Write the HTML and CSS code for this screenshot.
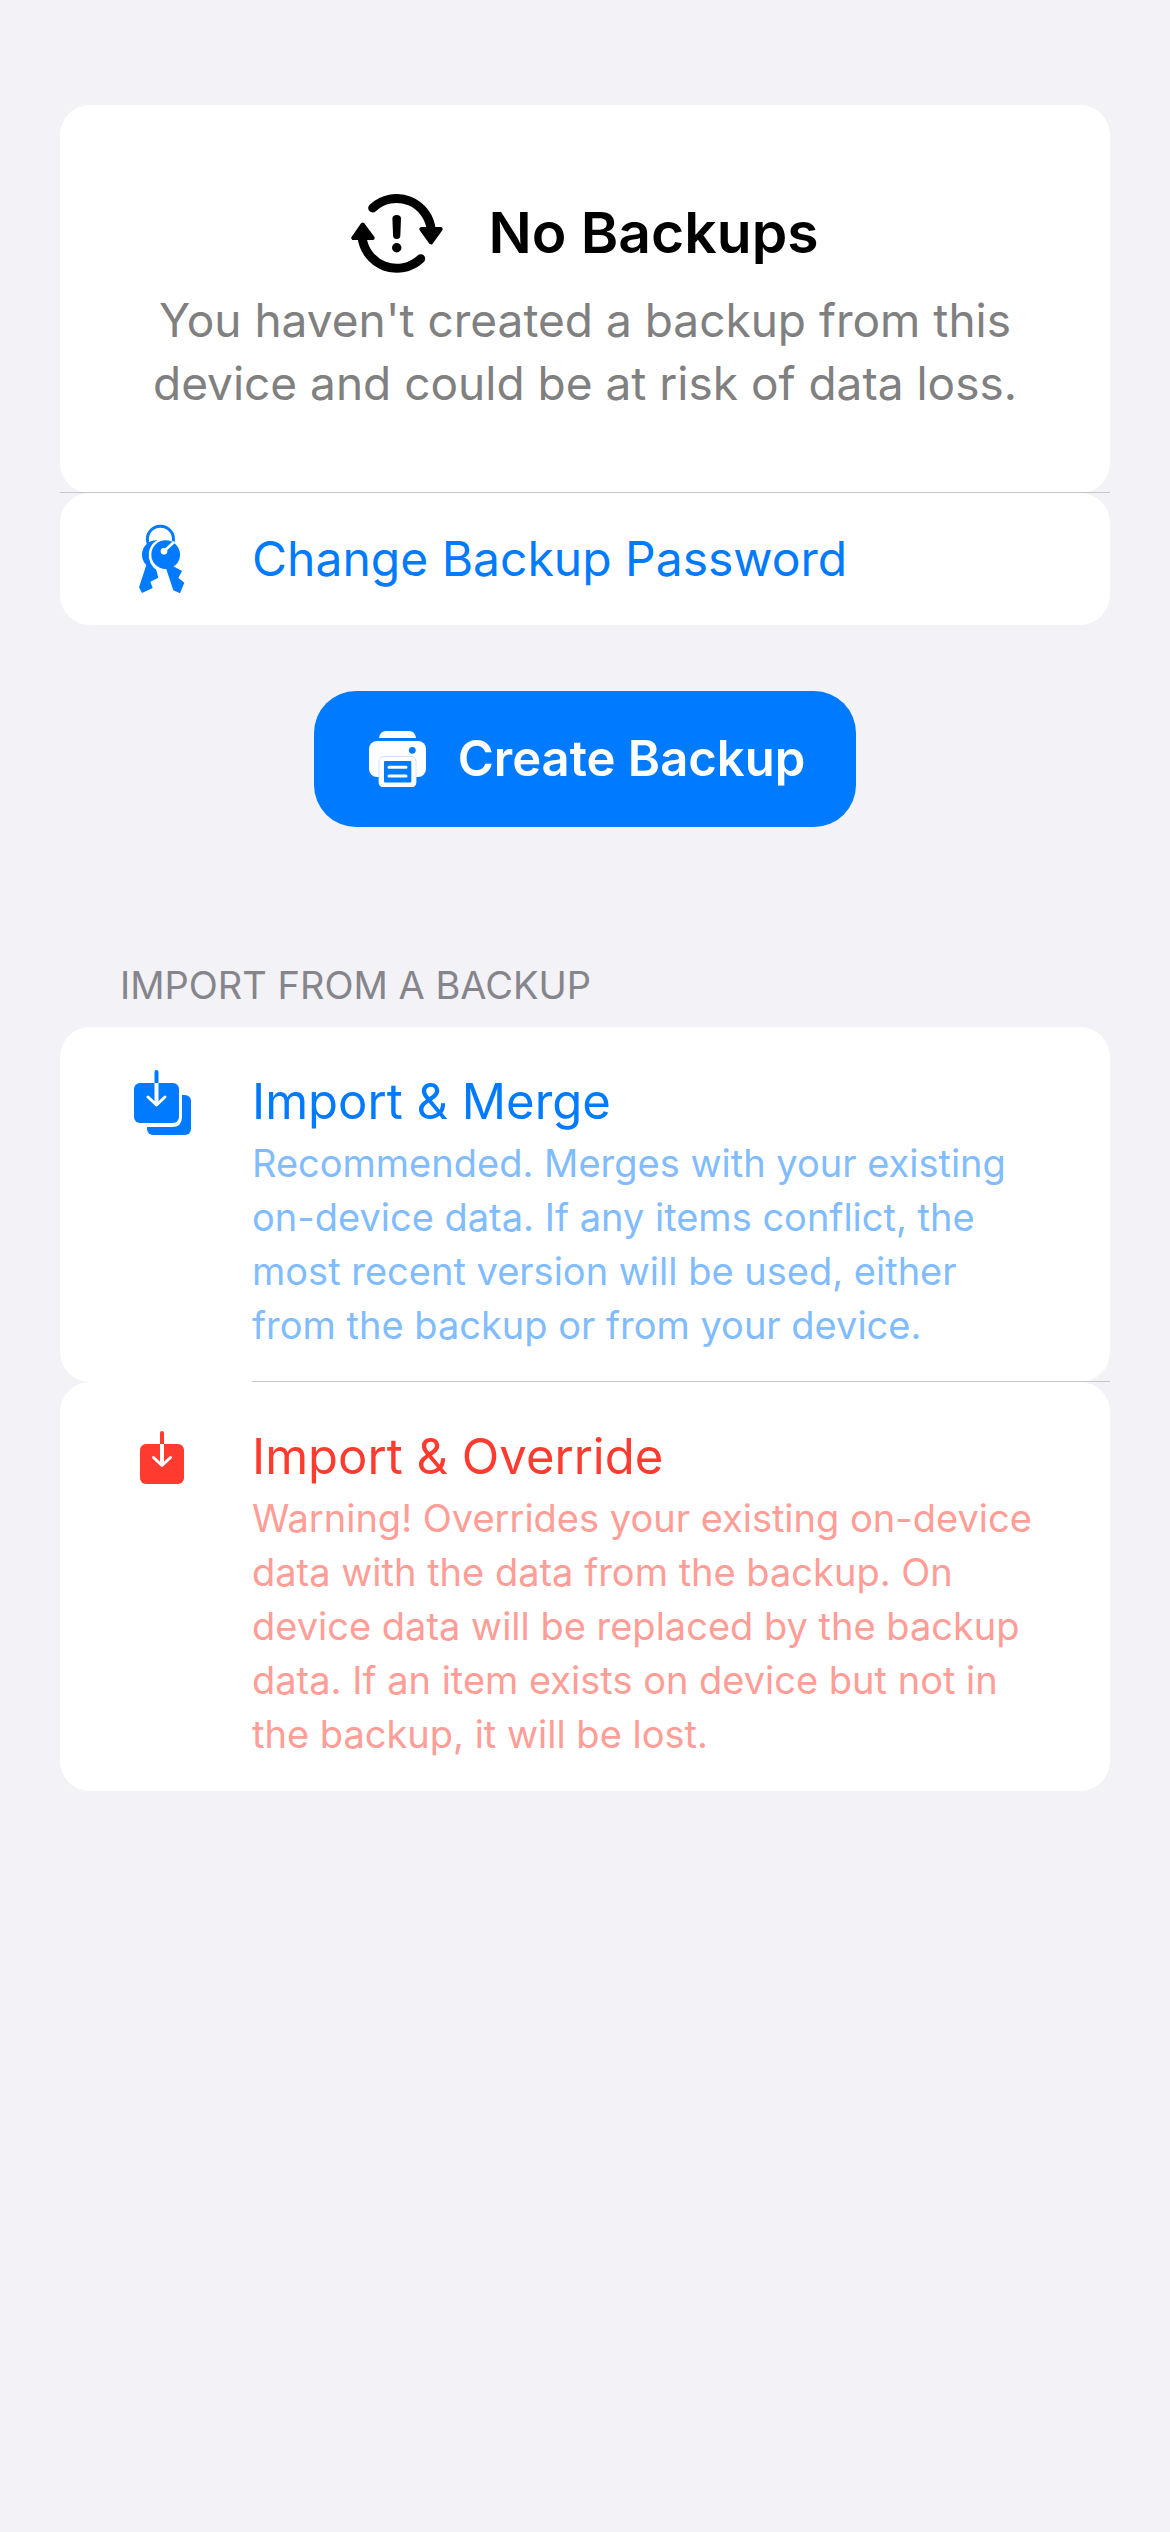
FILE: index.html
```html
<!DOCTYPE html>
<html lang="en">
<head>
<meta charset="utf-8">
<meta name="viewport" content="width=device-width, initial-scale=1">
<title>Backups</title>
<link rel="stylesheet" href="styles.css">
</head>
<body>
<main class="page">
  <section class="group">
    <div class="row status">
      <h1 class="status-title">
        <svg width="92" height="79" viewBox="0 0 92 79" aria-hidden="true">
          <g fill="none" stroke="currentColor" stroke-width="9" stroke-linecap="round">
            <path d="M21.700 14A34.800 34.800 0 0 1 80.300 37"/>
            <path d="M69.700 64.700A34.800 34.800 0 0 1 11 42"/>
          </g>
          <g fill="currentColor" stroke="currentColor" stroke-width="4" stroke-linejoin="round">
            <path d="M70.300 35H89.700L80 48.500Z"/>
            <path d="M2.300 44H21.700L11.700 30.500Z"/>
          </g>
          <path fill="currentColor" d="M41.400 24.500C41.400 22.500 43 21 45.700 21S50 22.500 50 24.500L49.300 42C49.200 44 47.800 45 45.700 45S42.200 44 42.100 42Z"/>
          <circle fill="currentColor" cx="45.700" cy="53.700" r="4.700"/>
        </svg>
        <span>No Backups</span>
      </h1>
      <p class="status-text">You haven't created a backup from this device and could be at risk of data loss.</p>
    </div>
    <button type="button" class="row action">
      <span class="icon-slot">
        <svg width="46" height="70" viewBox="57 43 138 210" aria-hidden="true">
          <circle fill="#007aff" cx="109" cy="135" r="43"/>
          <path fill="#007aff" d="M80 163L57 233L66 250L98 235L91 216L115 204L106 170Z"/>
          <path fill="#fff" d="M128 84A54 54 0 0 0 114 184L122 204L150 178L168 96L158 90Z"/>
          <path fill="none" stroke="#007aff" stroke-width="9" d="M85 102L83 96A39 39 0 1 1 159.500 96"/>
          <circle fill="#007aff" cx="137" cy="135" r="43"/>
          <path fill="#007aff" d="M137 173L160 242L180 251L193 219L175 205L186 184L160 170Z"/>
          <circle fill="#fff" cx="132" cy="125" r="10"/>
          <path fill="none" stroke="#fff" stroke-width="8" d="M132 125L162 97"/>
        </svg>
      </span>
      <span class="label">Change Backup Password</span>
    </button>
  </section>

  <button type="button" class="create">
    <svg width="57" height="56" viewBox="0 0 57 56" aria-hidden="true">
      <path fill="#fff" d="M10 7Q11 0 17 0H40Q46 0 47 7Z"/>
      <rect fill="#fff" y="10" width="57" height="36" rx="8"/>
      <circle fill="#007aff" cx="43.300" cy="19.300" r="3.400"/>
      <rect fill="#fff" stroke="#cce4ff" x="10" y="25.500" width="37" height="30.500" rx="5"/>
      <rect fill="#fff" x="10" y="46" width="37" height="10" rx="4"/>
      <rect fill="#007aff" x="15" y="30" width="27.300" height="21.500" rx="1"/>
      <path fill="none" stroke="#fff" stroke-width="3" stroke-linecap="round" d="M20 36.300H37M20 45H37"/>
    </svg>
    <span>Create Backup</span>
  </button>

  <section>
    <h2 class="section-title">Import from a Backup</h2>
    <div class="group">
      <button type="button" class="row option">
        <span class="icon-slot">
          <svg width="57" height="65" viewBox="0 0 57 65" aria-hidden="true">
            <rect fill="#007aff" x="13" y="25" width="44" height="40" rx="6"/>
            <path fill="#fff" d="M0 13H48V47Q48 57 38 57H0Z"/>
            <rect fill="#007aff" y="13" width="45" height="40" rx="6"/>
            <path fill="none" stroke="#007aff" stroke-width="4" stroke-linecap="round" d="M22.500 2V13"/>
            <path fill="none" stroke="#fff" stroke-width="4" d="M22.500 13V34"/>
            <path fill="none" stroke="#fff" stroke-width="3" stroke-linecap="round" stroke-linejoin="round" d="M14 27L22.500 35L31 27"/>
          </svg>
        </span>
        <span class="option-body">
          <span class="option-title">Import &amp; Merge</span>
          <span class="detail">Recommended. Merges with your existing on-device data. If any items conflict, the most recent version will be used, either from the backup or from your device.</span>
        </span>
      </button>
      <button type="button" class="row option override">
        <span class="icon-slot">
          <svg width="44" height="53" viewBox="0 0 44 53" aria-hidden="true">
            <rect fill="#ff3b30" y="13" width="44" height="40" rx="6"/>
            <path fill="none" stroke="#ff3b30" stroke-width="4" stroke-linecap="round" d="M22 2V13"/>
            <path fill="none" stroke="#fff" stroke-width="4" d="M22 13V34"/>
            <path fill="none" stroke="#fff" stroke-width="3" stroke-linecap="round" stroke-linejoin="round" d="M13.500 26.500L22 34.500L30.500 26.500"/>
          </svg>
        </span>
        <span class="option-body">
          <span class="option-title">Import &amp; Override</span>
          <span class="detail">Warning! Overrides your existing on-device data with the data from the backup. On device data will be replaced by the backup data. If an item exists on device but not in the backup, it will be lost.</span>
        </span>
      </button>
    </div>
  </section>
</main>
</body>
</html>
```
FILE: styles.css
```css
* {
  box-sizing: border-box;
}

body {
  margin: 0;
  min-height: 100vh;
  background: #f2f2f7;
  color: #000;
  font-family: Inter, "Liberation Sans", sans-serif;
}

button {
  border: 0;
  margin: 0;
  font: inherit;
  text-align: left;
  cursor: pointer;
}

svg {
  display: block;
  flex: none;
}

.page {
  display: flex;
  flex-direction: column;
  padding: 105px 60px 60px;
}

.group {
  display: flex;
  flex-direction: column;
}

.row {
  position: relative;
  padding: 0 60px;
  border-radius: 30px;
  background: #fff;
}

/* Hairline between two rows of a group */
.row:not(:last-child)::after {
  content: "";
  position: absolute;
  right: 0;
  bottom: 0;
  left: 0;
  height: 1px;
  background: #c6c6c8;
}

.row.option:not(:last-child)::after {
  left: 192px;
}

.status {
  padding-top: 88px;
  padding-bottom: 78px;
  text-align: center;
}

.status-title {
  display: flex;
  justify-content: center;
  align-items: center;
  gap: 45px;
  margin: 0 0 16px;
  font-size: 57px;
  font-weight: 600;
  line-height: 80px;
}

.status-text {
  margin: 0;
  color: #808080;
  font-size: 46px;
  line-height: 63px;
}

.action,
.option {
  display: flex;
  gap: 48px;
  color: #007aff;
}

.action {
  align-items: center;
  padding-top: 36px;
  padding-bottom: 36px;
}

.icon-slot {
  display: flex;
  flex: none;
  justify-content: center;
  align-items: center;
  width: 84px;
  height: 60px;
}

.label {
  font-size: 48px;
  line-height: 60px;
}

.option-title {
  font-size: 49px;
  line-height: 60px;
}

.create {
  display: flex;
  align-items: center;
  align-self: center;
  gap: 32px;
  margin: 66px 0 134px;
  padding: 38px 51px 38px 55px;
  border-radius: 42px;
  background: #007aff;
  color: #fff;
  font-size: 49px;
  font-weight: 600;
  line-height: 60px;
}

.section-title {
  margin: 0 60px 18px;
  color: #85858b;
  font-size: 38px;
  font-weight: 400;
  line-height: 48px;
  text-transform: uppercase;
}

.option {
  align-items: flex-start;
  padding-top: 45px;
  padding-bottom: 30px;
}

.option-body {
  display: flex;
  flex: 1;
  flex-direction: column;
  gap: 4px;
}

.detail {
  color: #80bcff;
  font-size: 38px;
  line-height: 54px;
}

.override {
  color: #ff3b30;
}

.override .detail {
  color: #ff9d97;
}
```
